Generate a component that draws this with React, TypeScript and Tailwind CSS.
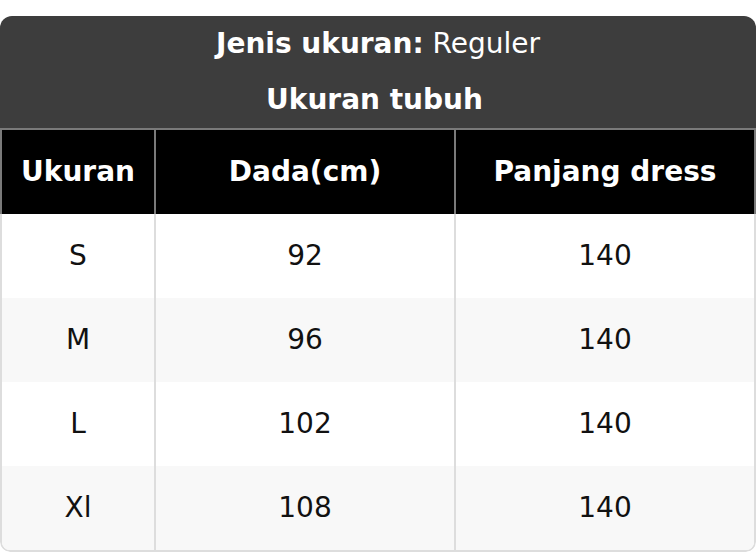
import React from 'react';

const ROWS = [
  { size: 'S', chest: '92', length: '140' },
  { size: 'M', chest: '96', length: '140' },
  { size: 'L', chest: '102', length: '140' },
  { size: 'Xl', chest: '108', length: '140' },
];

export default function App() {
  return (
    <div className="w-[756px] h-[552px] bg-white pt-4 font-['DejaVu_Sans',sans-serif]">
      <div className="rounded-t-xl rounded-b-[10px] overflow-hidden">
        {/* Title block */}
        <div className="bg-[#3d3d3d] text-white text-center text-[28px]">
          <div className="h-14 leading-[56px]">
            <span className="font-bold">Jenis ukuran:</span> Reguler
          </div>
          <div className="h-14 leading-[56px] font-bold pr-[7px]">Ukuran tubuh</div>
        </div>

        {/* Column headers */}
        <div className="grid grid-cols-[152px_300px_1fr] bg-black text-white font-bold text-[28px] border-2 border-b-0 border-[#7a7a7a]">
          <div className="h-[84px] flex items-center justify-center">Ukuran</div>
          <div className="h-[84px] flex items-center justify-center border-l-2 border-[#7a7a7a]">Dada(cm)</div>
          <div className="h-[84px] flex items-center justify-center border-l-2 border-[#7a7a7a]">Panjang dress</div>
        </div>

        {/* Body */}
        <div className="border-x-2 border-b-2 border-[#dddddd] rounded-b-[10px] overflow-hidden text-[28px] text-[#111]">
          {ROWS.map((r, i) => (
            <div
              key={r.size}
              className={`grid grid-cols-[152px_300px_1fr] ${i % 2 === 1 ? 'bg-[#f8f8f8]' : 'bg-white'}`}
            >
              <div className="h-[84px] flex items-center justify-center">{r.size}</div>
              <div className="h-[84px] flex items-center justify-center border-l-2 border-[#dddddd]">{r.chest}</div>
              <div className="h-[84px] flex items-center justify-center border-l-2 border-[#dddddd]">{r.length}</div>
            </div>
          ))}
        </div>
      </div>
    </div>
  );
}
